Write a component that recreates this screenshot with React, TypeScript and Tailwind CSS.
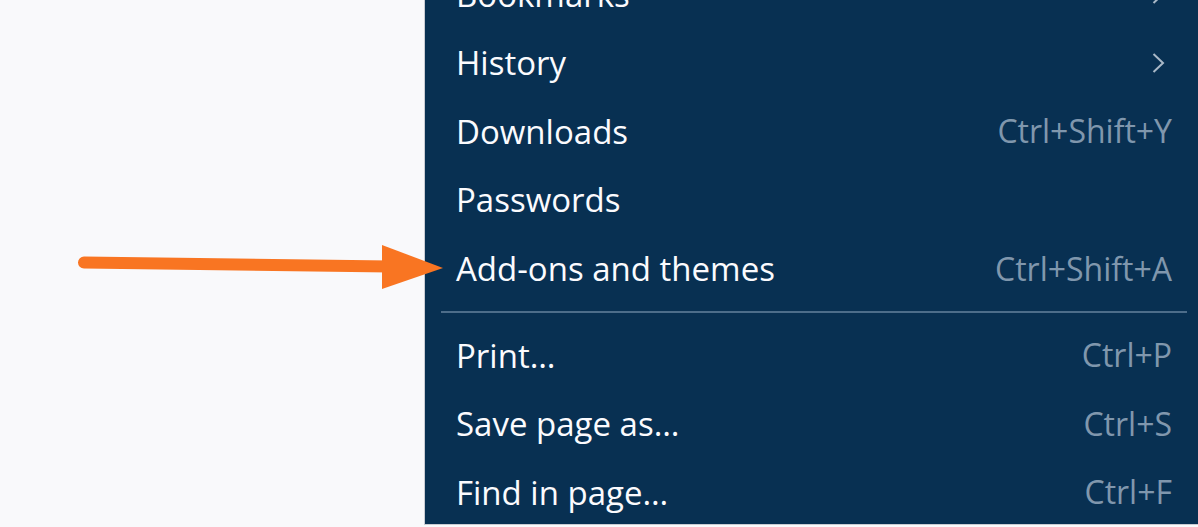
type Item = { label: string; shortcut?: string; sub?: boolean };

const top: Item[] = [
  { label: "Bookmarks", sub: true },
  { label: "History", sub: true },
  { label: "Downloads", shortcut: "Ctrl+Shift+Y" },
  { label: "Passwords" },
  { label: "Add-ons and themes", shortcut: "Ctrl+Shift+A" },
];

const bottom: Item[] = [
  { label: "Print…", shortcut: "Ctrl+P" },
  { label: "Save page as…", shortcut: "Ctrl+S" },
  { label: "Find in page…", shortcut: "Ctrl+F" },
];

function Row({ item }: { item: Item }) {
  return (
    <div className="flex h-[68.6px] items-center justify-between pl-[31px] pr-[26px]">
      <span className="text-[#fbfbfe]">{item.label}</span>
      {item.shortcut && <span className="text-[32px] text-[#8097ad]">{item.shortcut}</span>}
      {item.sub && (
        <svg className="mr-[7px]" width="13" height="20" viewBox="0 0 13 20">
          <polyline points="1.5,1 11,10 1.5,19" fill="none" stroke="#a9b8c7" strokeWidth="2" />
        </svg>
      )}
    </div>
  );
}

export default function App() {
  return (
    <div className="relative h-[527px] w-[1198px] overflow-hidden bg-[#f9f9fb] font-['Open_Sans',sans-serif] text-[33px]">
      <div className="ml-[424px] h-[525px] overflow-hidden border-l border-b border-[#c9ccd3] bg-[#083052]">
        <div className="-mt-[40px]">
          {top.map((item) => (
            <Row key={item.label} item={item} />
          ))}
          <div className="mx-[16px] my-[8px] h-[2px] w-[746px] bg-[#4d6d8a]" />
          {bottom.map((item) => (
            <Row key={item.label} item={item} />
          ))}
        </div>
      </div>

      {/* orange pointer */}
      <svg className="absolute left-0 top-0" width="460" height="320" viewBox="0 0 460 320">
        <line x1="84" y1="262.5" x2="390" y2="266.5" stroke="#f97522" strokeWidth="12" strokeLinecap="round" />
        <polygon points="382,245 443,268 382,289" fill="#f97522" />
      </svg>
    </div>
  );
}
